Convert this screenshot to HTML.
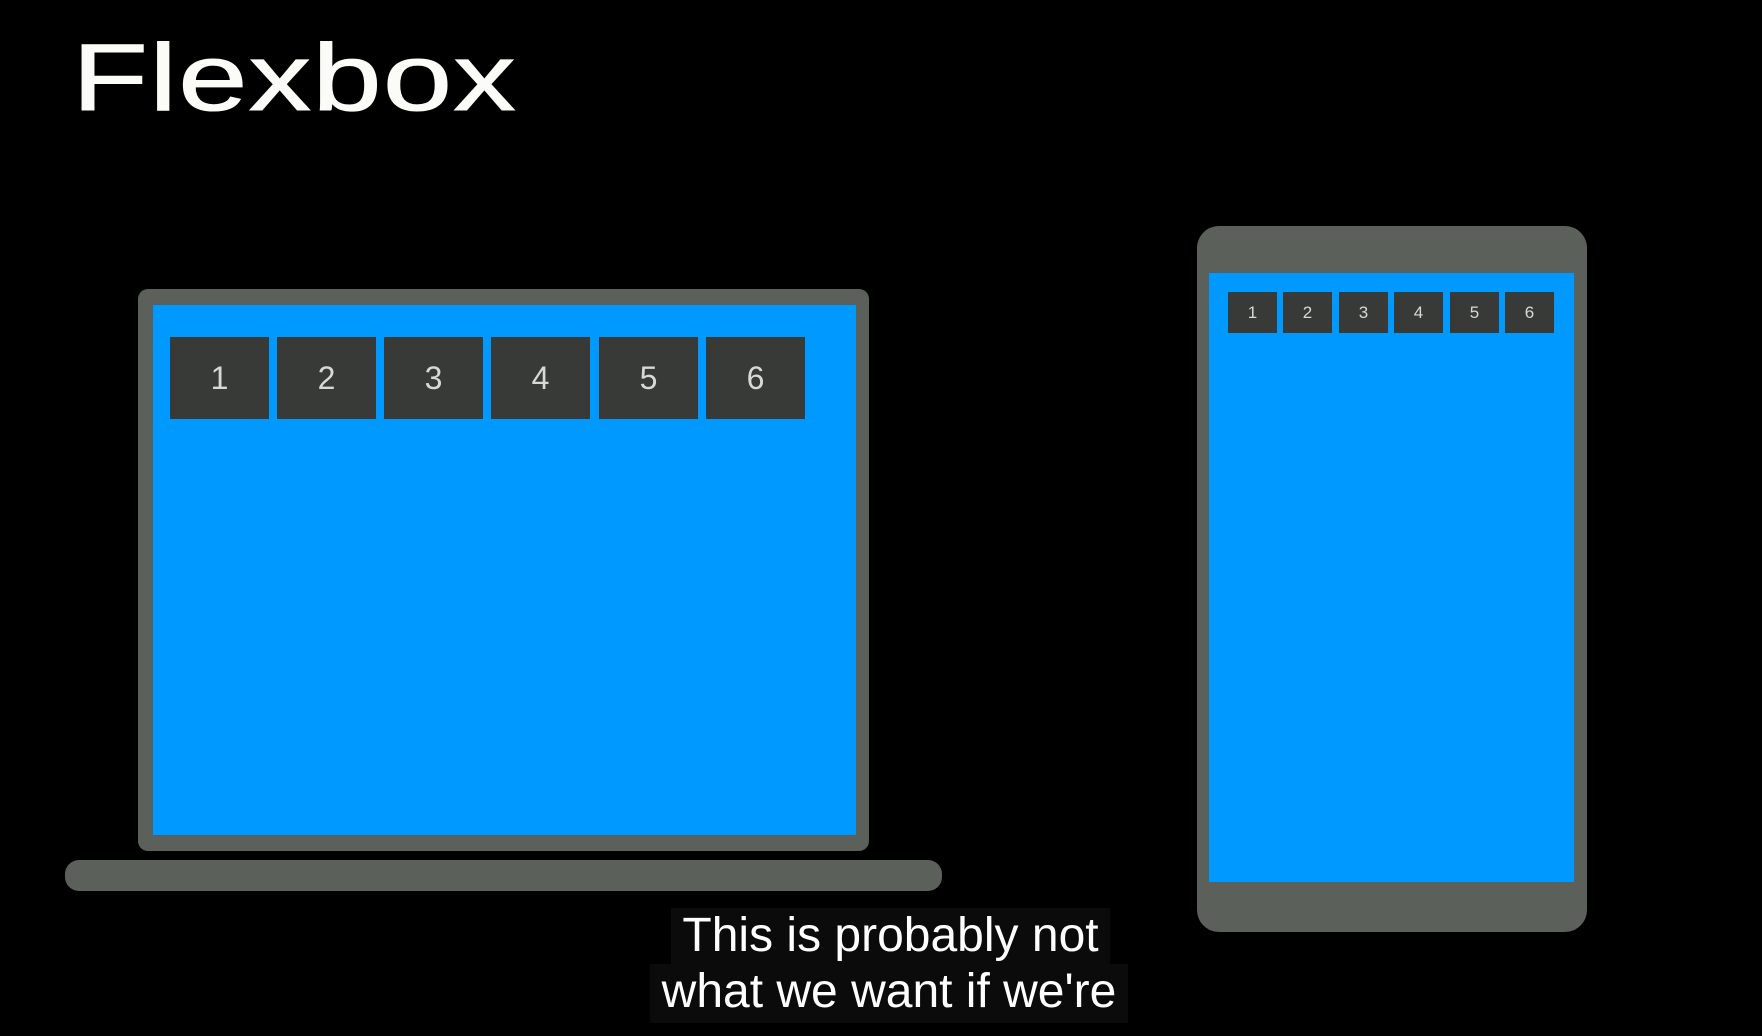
<!DOCTYPE html>
<html><head><meta charset="utf-8"><style>
*{margin:0;padding:0;box-sizing:border-box}
body{width:1762px;height:1036px;background:#000;position:relative;overflow:hidden;font-family:"Liberation Sans",sans-serif}
.a{position:absolute}
.t{left:72px;top:31px;font-size:95px;color:#fbfbf7;line-height:1;transform:scaleX(1.31);transform-origin:left top;-webkit-text-stroke:1px #fbfbf7;letter-spacing:1px}
.g{background:#5c605b}
.b{background:#0099ff}
.bx{position:absolute;background:#383a37;color:#d8d8d8;display:flex;align-items:center;justify-content:center}
.big{top:337px;width:99px;height:82px;font-size:32px}
.sm{top:292px;width:49px;height:41px;font-size:17px}
.cap{background:#0b0b0b;color:#fff;font-size:48px;line-height:56px;text-align:center;white-space:nowrap}
</style></head><body>
<div class="a t">Flexbox</div>
<div class="a g" style="left:138px;top:289px;width:731px;height:562px;border-radius:10px"></div>
<div class="a b" style="left:153px;top:305px;width:703px;height:530px"></div>
<div class="a g" style="left:65px;top:860px;width:877px;height:31px;border-radius:14px"></div>
<div class="bx big" style="left:170px">1</div>
<div class="bx big" style="left:277px">2</div>
<div class="bx big" style="left:384px">3</div>
<div class="bx big" style="left:491px">4</div>
<div class="bx big" style="left:599px">5</div>
<div class="bx big" style="left:706px">6</div>
<div class="a g" style="left:1197px;top:226px;width:390px;height:706px;border-radius:22px"></div>
<div class="a b" style="left:1209px;top:273px;width:365px;height:609px"></div>
<div class="bx sm" style="left:1228px">1</div>
<div class="bx sm" style="left:1283px">2</div>
<div class="bx sm" style="left:1339px">3</div>
<div class="bx sm" style="left:1394px">4</div>
<div class="bx sm" style="left:1450px">5</div>
<div class="bx sm" style="left:1505px">6</div>
<div class="a cap" style="left:671px;top:908px;width:439px;height:56px">This is probably not</div>
<div class="a cap" style="left:650px;top:964px;width:478px;height:59px">what we want if we're</div>
</body></html>
